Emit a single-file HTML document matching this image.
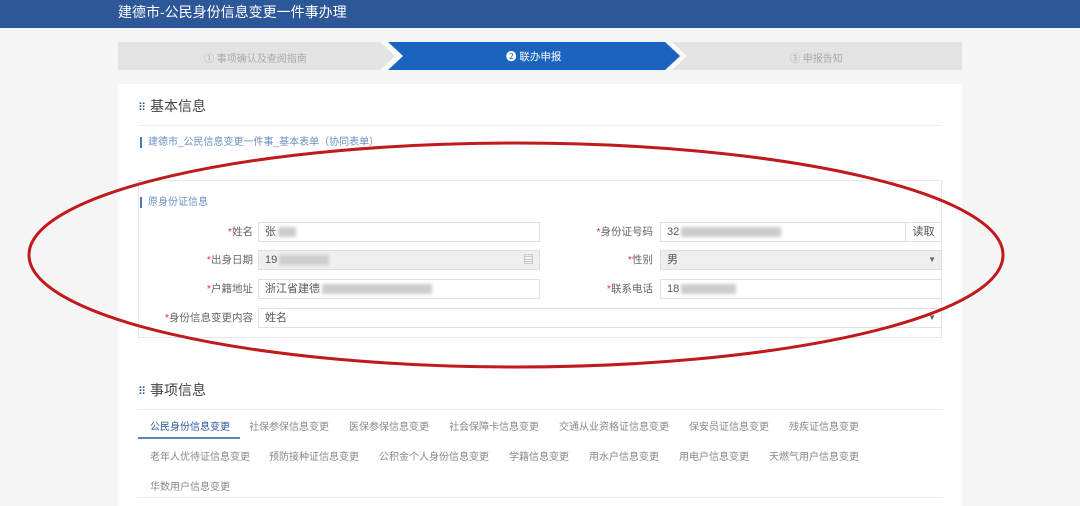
<!DOCTYPE html><html><head><meta charset="utf-8"><style>
*{margin:0;padding:0;box-sizing:border-box}
body{width:1080px;height:506px;overflow:hidden;background:#f5f5f5;font-family:"Liberation Sans","Noto Sans CJK SC",sans-serif;position:relative;color:#333}
.a{position:absolute}
.hd{left:0;top:0;width:1080px;height:28px;background:#2c5899;color:#fff;font-size:14px;line-height:25px;padding-left:118px}
.inp{position:absolute;height:20px;border:1px solid #e0e0e0;background:#fff;font-size:11px;line-height:18px;padding-left:6px;color:#555}
.lab{position:absolute;font-size:10.5px;color:#666;text-align:right;line-height:20px}
.lab b{color:#d33;font-weight:normal}
.tab{position:absolute;font-size:10px;color:#888}
.blur{display:inline-block;height:10px;background:#ccc;vertical-align:middle;filter:blur(1.5px);margin-left:2px}
</style></head><body>
<div class="a hd">建德市-公民身份信息变更一件事办理</div>
<div class="a" style="left:118px;top:42px;width:844px;height:28px;background:#e3e3e3"></div>
<svg class="a" style="left:380px;top:42px" width="310" height="28"><polygon points="8,0 285,0 300,14 285,28 8,28 23,14" fill="#1a63bf"/><polygon points="0,0 8,0 23,14 8,28 0,28 15,14" fill="#fff" opacity=".8"/><polygon points="286,0 292,0 307,14 292,28 286,28 301,14" fill="#fff" opacity=".8"/></svg>
<div class="a" style="left:204px;top:50px;font-size:10px;color:#aaa">① 事项确认及查阅指南</div>
<div class="a" style="left:506px;top:49px;font-size:10.5px;color:#fff">❷ 联办申报</div>
<div class="a" style="left:790px;top:50px;font-size:10px;color:#aaa">③ 申报告知</div>
<div class="a" style="left:118px;top:84px;width:844px;height:422px;background:#fff"></div>
<div class="a" style="left:138px;top:96px;font-size:14px;color:#444"><span style="color:#2c5899;font-size:11px">⠿</span> 基本信息</div>
<div class="a" style="left:138px;top:125px;width:804px;height:1px;background:#eee"></div>
<div class="a" style="left:140px;top:137px;font-size:10px;color:#6a8fc0;border-left:2px solid #4a7ab8;padding-left:6px;line-height:11px">建德市_公民信息变更一件事_基本表单（协同表单）</div>
<div class="a" style="left:138px;top:180px;width:804px;height:158px;border:1px solid #e8e8e8"></div>
<div class="a" style="left:140px;top:197px;font-size:10px;color:#6a8fc0;border-left:2px solid #4a7ab8;padding-left:6px;line-height:11px">原身份证信息</div>
<div class="lab" style="left:150px;top:222px;width:103px"><b>*</b>姓名</div>
<div class="inp" style="left:258px;top:222px;width:282px">张<span class="blur" style="width:18px"></span></div>
<div class="lab" style="left:150px;top:250px;width:103px"><b>*</b>出身日期</div>
<div class="inp" style="left:258px;top:250px;width:282px;background:#efefef">19<span class="blur" style="width:50px"></span><span style="position:absolute;right:5px;color:#999">▤</span></div>
<div class="lab" style="left:150px;top:279px;width:103px"><b>*</b>户籍地址</div>
<div class="inp" style="left:258px;top:279px;width:282px">浙江省建德<span class="blur" style="width:110px"></span></div>
<div class="lab" style="left:140px;top:308px;width:113px"><b>*</b>身份信息变更内容</div>
<div class="inp" style="left:258px;top:308px;width:684px">姓名<span style="position:absolute;right:5px;color:#666;font-size:8px">▼</span></div>
<div class="lab" style="left:550px;top:222px;width:103px"><b>*</b>身份证号码</div>
<div class="inp" style="left:660px;top:222px;width:246px">32<span class="blur" style="width:100px"></span></div>
<div class="inp" style="left:905px;top:222px;width:37px;padding:0;text-align:center;color:#555">读取</div>
<div class="lab" style="left:550px;top:250px;width:103px"><b>*</b>性别</div>
<div class="inp" style="left:660px;top:250px;width:282px;background:#efefef">男<span style="position:absolute;right:5px;color:#666;font-size:8px">▼</span></div>
<div class="lab" style="left:550px;top:279px;width:103px"><b>*</b>联系电话</div>
<div class="inp" style="left:660px;top:279px;width:282px">18<span class="blur" style="width:55px"></span></div>
<div class="a" style="left:138px;top:380px;font-size:14px;color:#444"><span style="color:#2c5899;font-size:11px">⠿</span> 事项信息</div>
<div class="a" style="left:138px;top:409px;width:804px;height:1px;background:#eee"></div>
<div class="a" style="left:138px;top:437px;width:102px;height:2px;background:#5a84b5"></div>
<div class="a" style="left:138px;top:497px;width:804px;height:1px;background:#eee"></div>
<div class="tab" style="left:150px;top:418px;color:#2c5899">公民身份信息变更</div>
<div class="tab" style="left:249px;top:418px">社保参保信息变更</div>
<div class="tab" style="left:349px;top:418px">医保参保信息变更</div>
<div class="tab" style="left:449px;top:418px">社会保障卡信息变更</div>
<div class="tab" style="left:559px;top:418px">交通从业资格证信息变更</div>
<div class="tab" style="left:689px;top:418px">保安员证信息变更</div>
<div class="tab" style="left:789px;top:418px">残疾证信息变更</div>
<div class="tab" style="left:150px;top:448px">老年人优待证信息变更</div>
<div class="tab" style="left:269px;top:448px">预防接种证信息变更</div>
<div class="tab" style="left:379px;top:448px">公积金个人身份信息变更</div>
<div class="tab" style="left:509px;top:448px">学籍信息变更</div>
<div class="tab" style="left:589px;top:448px">用水户信息变更</div>
<div class="tab" style="left:679px;top:448px">用电户信息变更</div>
<div class="tab" style="left:769px;top:448px">天燃气用户信息变更</div>
<div class="tab" style="left:150px;top:478px">华数用户信息变更</div>
<svg class="a" style="left:0;top:0" width="1080" height="506"><ellipse cx="516" cy="255" rx="487" ry="112" fill="none" stroke="#c0191e" stroke-width="3"/></svg>
</body></html>
